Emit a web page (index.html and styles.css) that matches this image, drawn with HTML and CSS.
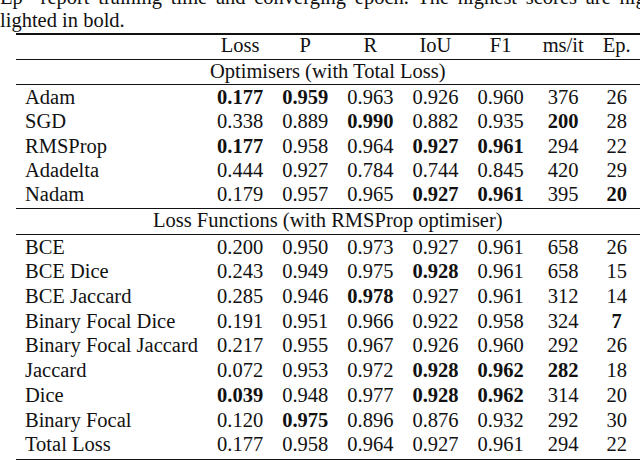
FILE: index.html
```html
<!DOCTYPE html>
<html lang="en">
<head>
<meta charset="utf-8">
<title>Results table</title>
<link rel="stylesheet" href="styles.css">
</head>
<body>
<div class="caption">
  <div class="cap-line cap-first">Ep” report training time and converging epoch. The highest scores are high-</div>
  <div class="cap-line">lighted in bold.</div>
</div>
<table class="results">
  <thead>
    <tr class="head-row">
      <th class="name"></th><th>Loss</th><th>P</th><th>R</th><th>IoU</th><th>F1</th><th>ms/it</th><th>Ep.</th>
    </tr>
  </thead>
  <tbody>
    <tr class="group-row"><td colspan="8">Optimisers (with Total Loss)</td></tr>
    <tr class="first"><td class="name">Adam</td><td class="b">0.177</td><td class="b">0.959</td><td>0.963</td><td>0.926</td><td>0.960</td><td>376</td><td>26</td></tr>
    <tr><td class="name">SGD</td><td>0.338</td><td>0.889</td><td class="b">0.990</td><td>0.882</td><td>0.935</td><td class="b">200</td><td>28</td></tr>
    <tr><td class="name">RMSProp</td><td class="b">0.177</td><td>0.958</td><td>0.964</td><td class="b">0.927</td><td class="b">0.961</td><td>294</td><td>22</td></tr>
    <tr><td class="name">Adadelta</td><td>0.444</td><td>0.927</td><td>0.784</td><td>0.744</td><td>0.845</td><td>420</td><td>29</td></tr>
    <tr><td class="name">Nadam</td><td>0.179</td><td>0.957</td><td>0.965</td><td class="b">0.927</td><td class="b">0.961</td><td>395</td><td class="b">20</td></tr>
  </tbody>
  <tbody class="losses">
    <tr class="group-row"><td colspan="8">Loss Functions (with RMSProp optimiser)</td></tr>
    <tr class="first"><td class="name">BCE</td><td>0.200</td><td>0.950</td><td>0.973</td><td>0.927</td><td>0.961</td><td>658</td><td>26</td></tr>
    <tr><td class="name">BCE Dice</td><td>0.243</td><td>0.949</td><td>0.975</td><td class="b">0.928</td><td>0.961</td><td>658</td><td>15</td></tr>
    <tr><td class="name">BCE Jaccard</td><td>0.285</td><td>0.946</td><td class="b">0.978</td><td>0.927</td><td>0.961</td><td>312</td><td>14</td></tr>
    <tr><td class="name">Binary Focal Dice</td><td>0.191</td><td>0.951</td><td>0.966</td><td>0.922</td><td>0.958</td><td>324</td><td class="b">7</td></tr>
    <tr><td class="name">Binary Focal Jaccard</td><td>0.217</td><td>0.955</td><td>0.967</td><td>0.926</td><td>0.960</td><td>292</td><td>26</td></tr>
    <tr><td class="name">Jaccard</td><td>0.072</td><td>0.953</td><td>0.972</td><td class="b">0.928</td><td class="b">0.962</td><td class="b">282</td><td>18</td></tr>
    <tr><td class="name">Dice</td><td class="b">0.039</td><td>0.948</td><td>0.977</td><td class="b">0.928</td><td class="b">0.962</td><td>314</td><td>20</td></tr>
    <tr><td class="name">Binary Focal</td><td>0.120</td><td class="b">0.975</td><td>0.896</td><td>0.876</td><td>0.932</td><td>292</td><td>30</td></tr>
    <tr class="last"><td class="name">Total Loss</td><td>0.177</td><td>0.958</td><td>0.964</td><td>0.927</td><td>0.961</td><td>294</td><td>22</td></tr>
  </tbody>
</table>
</body>
</html>
```

FILE: styles.css
```css
html, body {
  margin: 0;
  padding: 0;
  background: #ffffff;
  overflow: hidden;
}

body {
  width: 640px;
  height: 460px;
  font-family: "Liberation Serif", "Times New Roman", serif;
  font-size: 20.5px;
  color: #111111;
}

.caption {
  margin-top: -14.4px;
}

.cap-line {
  line-height: 23px;
  height: 23px;
  white-space: nowrap;
}

.cap-first {
  word-spacing: 3.6px;
}

.results {
  border-collapse: collapse;
  margin-left: 15.5px;
  margin-top: 1px;
  border-top: 2px solid #111111;
  border-bottom: 2px solid #111111;
}

.results th,
.results td {
  font-weight: normal;
  line-height: 20px;
  padding: 0.5px 9.5px 3.9px;
  text-align: center;
  white-space: nowrap;
}

.results th.name,
.results td.name {
  text-align: left;
}

.results td.b {
  font-weight: bold;
}

.head-row th {
  padding-top: 0;
}

.group-row td {
  border-top: 1px solid #111111;
  padding-top: 1px;
}

.first td {
  border-top: 1px solid #111111;
  padding-top: 1.5px;
}

.losses td {
  padding-bottom: 4.2px;
}

.losses .group-row td {
  padding-bottom: 3.9px;
}

.losses .last td {
  padding-bottom: 4.6px;
}
```
